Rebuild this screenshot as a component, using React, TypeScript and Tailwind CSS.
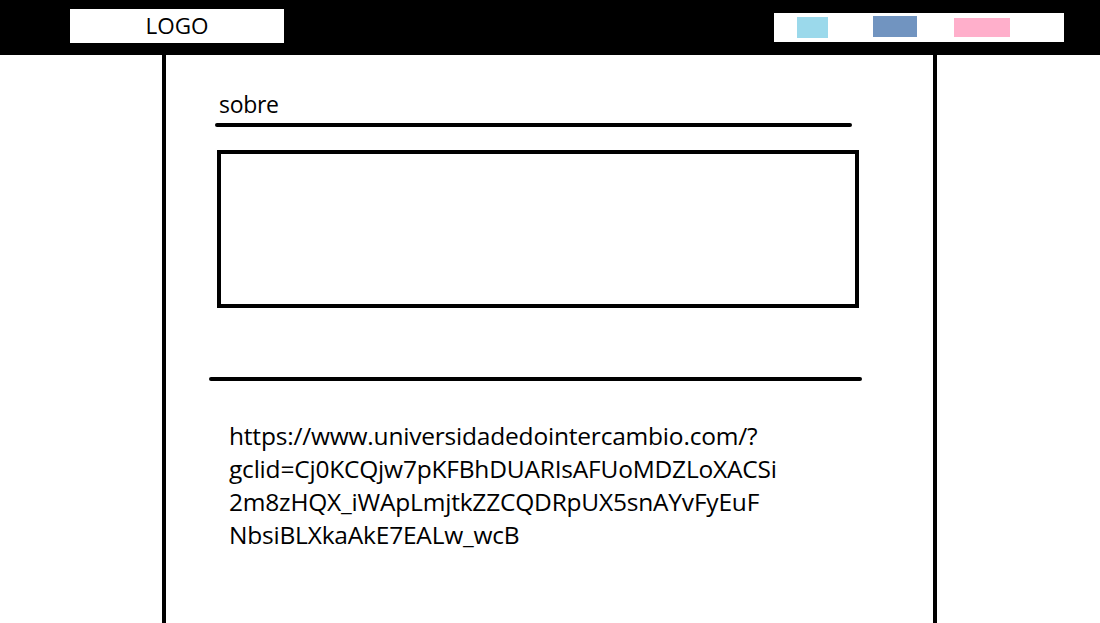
export default function App() {
  const urlLines = [
    "https://www.universidadedointercambio.com/?",
    "gclid=Cj0KCQjw7pKFBhDUARIsAFUoMDZLoXACSi",
    "2m8zHQX_iWApLmjtkZZCQDRpUX5snAYvFyEuF",
    "NbsiBLXkaAkE7EALw_wcB",
  ];

  return (
    <div className="w-[1100px] h-[623px] bg-white overflow-hidden" style={{ fontFamily: '"Open Sans", "Noto Sans", sans-serif' }}>
      {/* header */}
      <header className="h-[55px] bg-black flex items-start">
        <div className="ml-[70px] mt-[9px] w-[214px] h-[34px] bg-white flex items-center justify-center text-[22.5px] leading-none text-black">
          LOGO
        </div>
        <nav className="ml-auto mr-[36px] mt-[13px] w-[290px] h-[29px] bg-white flex items-center">
          <span className="ml-[23px] w-[31px] h-[21px] bg-[#9bd9eb]" />
          <span className="ml-[45px] w-[44px] h-[21px] bg-[#7194c0] -mt-[2px]" />
          <span className="ml-[37px] w-[56px] h-[19px] bg-[#ffafcb]" />
        </nav>
      </header>

      {/* main column */}
      <main className="ml-[162px] w-[775px] h-[568px] border-x-4 border-black">
        <div className="pt-[34px] pl-[53px] text-[23px] leading-[30px] text-black tracking-[-0.3px]">sobre</div>
        <div className="ml-[49px] mt-[4px] w-[637px] h-[4px] bg-black rounded-full" />
        <div className="ml-[51px] mt-[23px] w-[642px] h-[158px] border-4 border-black" />
        <div className="ml-[43px] mt-[69px] w-[653px] h-[4px] bg-black rounded-full" />
        <div className="pl-[63px] pt-[38px] text-[24.5px] leading-[33px] text-black tracking-[-0.2px]">
          {urlLines.map((l) => (
            <div key={l}>{l}</div>
          ))}
        </div>
      </main>
    </div>
  );
}
